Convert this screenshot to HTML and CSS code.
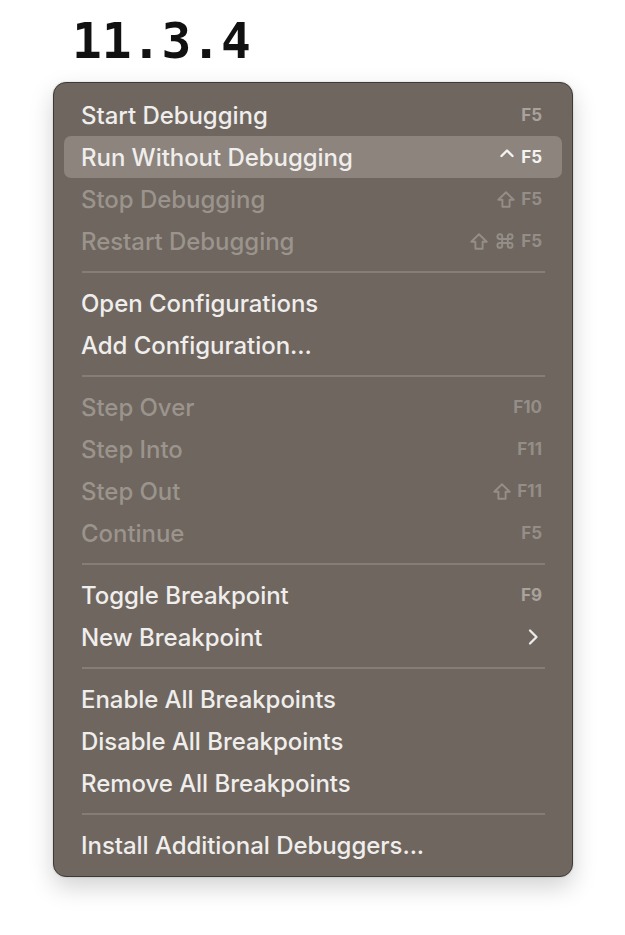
FILE: index.html
```html
<!DOCTYPE html>
<html>
<head>
<meta charset="utf-8">
<link rel="stylesheet" href="styles.css">
</head>
<body>
<h1 class="version">11.3.4</h1>
<div class="menu">
  <div class="item"><span class="label">Start Debugging</span><span class="key">F5</span></div>
  <div class="item active"><span class="label">Run Without Debugging</span><span class="key"><svg class="mod caret" width="16" height="10" viewBox="0 0 16 10"><path d="M2.5 8 L8 2.5 L13.5 8" fill="none" stroke="currentColor" stroke-width="2.4" stroke-linecap="round" stroke-linejoin="round"/></svg>F5</span></div>
  <div class="item disabled"><span class="label">Stop Debugging</span><span class="key"><svg class="mod" width="18" height="17" viewBox="0 0 18 17"><path d="M9 1.3 L16.7 8.8 L12.6 8.8 L12.6 15.7 L5.4 15.7 L5.4 8.8 L1.3 8.8 Z" fill="none" stroke="currentColor" stroke-width="1.9" stroke-linejoin="round"/></svg>F5</span></div>
  <div class="item disabled"><span class="label">Restart Debugging</span><span class="key"><svg class="mod shift" width="18" height="17" viewBox="0 0 18 17"><path d="M9 1.3 L16.7 8.8 L12.6 8.8 L12.6 15.7 L5.4 15.7 L5.4 8.8 L1.3 8.8 Z" fill="none" stroke="currentColor" stroke-width="1.9" stroke-linejoin="round"/></svg><svg class="mod" width="20" height="16" viewBox="0 0 24 20"><path d="M18.5 1.5a3 3 0 0 0-3 3v11a3 3 0 0 0 3 3 3 3 0 0 0 3-3 3 3 0 0 0-3-3h-13a3 3 0 0 0-3 3 3 3 0 0 0 3 3 3 3 0 0 0 3-3v-11a3 3 0 0 0-3-3 3 3 0 0 0-3 3 3 3 0 0 0 3 3h13a3 3 0 0 0 3-3 3 3 0 0 0-3-3z" fill="none" stroke="currentColor" stroke-width="2.4"/></svg>F5</span></div>
  <div class="sep"></div>
  <div class="item"><span class="label">Open Configurations</span></div>
  <div class="item"><span class="label">Add Configuration...</span></div>
  <div class="sep"></div>
  <div class="item disabled"><span class="label">Step Over</span><span class="key">F10</span></div>
  <div class="item disabled"><span class="label">Step Into</span><span class="key">F11</span></div>
  <div class="item disabled"><span class="label">Step Out</span><span class="key"><svg class="mod" width="18" height="17" viewBox="0 0 18 17"><path d="M9 1.3 L16.7 8.8 L12.6 8.8 L12.6 15.7 L5.4 15.7 L5.4 8.8 L1.3 8.8 Z" fill="none" stroke="currentColor" stroke-width="1.9" stroke-linejoin="round"/></svg>F11</span></div>
  <div class="item disabled"><span class="label">Continue</span><span class="key">F5</span></div>
  <div class="sep"></div>
  <div class="item"><span class="label">Toggle Breakpoint</span><span class="key">F9</span></div>
  <div class="item"><span class="label">New Breakpoint</span><svg class="chev" width="12" height="18" viewBox="0 0 12 18"><path d="M3 2.5 L9.5 9 L3 15.5" fill="none" stroke="#ecebe9" stroke-width="2.3" stroke-linecap="round" stroke-linejoin="round"/></svg></div>
  <div class="sep"></div>
  <div class="item"><span class="label">Enable All Breakpoints</span></div>
  <div class="item"><span class="label">Disable All Breakpoints</span></div>
  <div class="item"><span class="label">Remove All Breakpoints</span></div>
  <div class="sep"></div>
  <div class="item"><span class="label">Install Additional Debuggers...</span></div>
</div>
</body>
</html>
```
FILE: styles.css
```css
html, body {
  margin: 0;
  padding: 0;
  background: #ffffff;
}
body {
  width: 625px;
  height: 935px;
  overflow: hidden;
}
.version {
  margin: 17px 0 16px 72px;
  font-family: "DejaVu Sans Mono", monospace;
  font-weight: bold;
  font-size: 49.5px;
  line-height: 49px;
  color: #111111;
  letter-spacing: 0;
}
.menu {
  margin-left: 53px;
  width: 498px;
  border: 1px solid #3d3935;
  border-radius: 13px;
  background: #6e665f;
  padding: 11px 10px 10px 10px;
  box-shadow: 0 10px 24px rgba(0,0,0,0.18), 0 0 2px rgba(0,0,0,0.2);
  font-family: Inter, "Noto Sans", sans-serif;
}
.item {
  height: 42px;
  display: flex;
  align-items: center;
  justify-content: space-between;
  padding: 0 20px 0 17px;
  border-radius: 7px;
  color: #f0eeec;
  font-size: 24px;
  font-weight: 500;
  letter-spacing: -0.05px;
}
.item.active {
  background: #8c847d;
}
.item.disabled {
  color: #9b948d;
}
.key {
  font-size: 17px;
  font-weight: 700;
  color: #a9a39c;
  display: flex;
  align-items: center;
  letter-spacing: 0;
}
.item.active .key {
  color: #f4f3f1;
}
.item.disabled .key {
  color: #958e88;
}
.mod {
  display: block;
  margin-right: 6px;
}
.mod.shift {
  margin-right: 7px;
}
.mod.caret {
  margin-right: 6px;
  position: relative;
  top: -4px;
}
.chev {
  margin-right: 3px;
}
.sep {
  height: 20px;
  display: flex;
  align-items: center;
  margin: 0 17px 0 18px;
}
.sep::before {
  content: "";
  display: block;
  width: 100%;
  height: 2px;
  background: #857e77;
}
```
